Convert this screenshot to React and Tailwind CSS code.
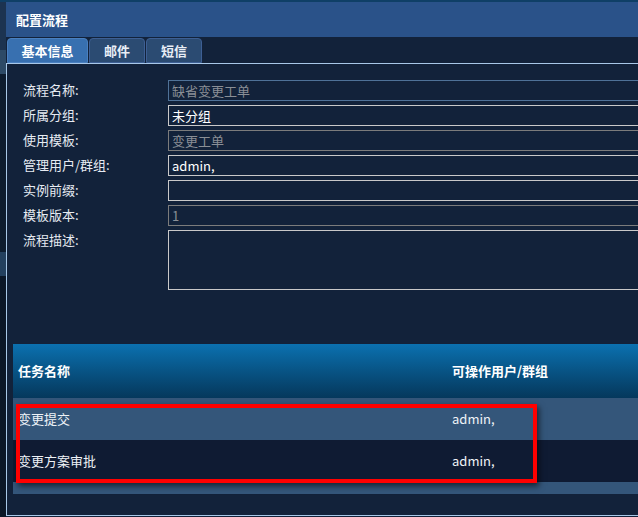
import React from 'react';

const fields = [
  { label: '流程名称:', value: '缺省变更工单', disabled: true, blue: true },
  { label: '所属分组:', value: '未分组' },
  { label: '使用模板:', value: '变更工单', disabled: true },
  { label: '管理用户/群组:', value: 'admin,' },
  { label: '实例前缀:', value: '' },
  { label: '模板版本:', value: '1', disabled: true },
];

const tasks = [
  { name: '变更提交', users: 'admin,', bg: 'bg-[#34567a]' },
  { name: '变更方案审批', users: 'admin,', bg: 'bg-[#0f1b33]' },
];

export default function App() {
  return (
    <div
      className="w-[638px] h-[517px] overflow-hidden bg-[#0b1a2c] flex flex-col text-[13px] text-white"
      style={{ fontFamily: '"Noto Sans CJK SC", "Noto Sans", sans-serif' }}
    >
      <div className="h-[2px] bg-[#0f3f66] shrink-0" />
      <div className="flex flex-1 min-h-0">
        {/* background page peeking on the left */}
        <div className="w-[6px] shrink-0 flex flex-col">
          <div className="h-[48px] bg-[#1c3350]" />
          <div className="h-[24px] bg-[#2d4a66]" />
          <div className="h-[178px] bg-[#0d1c2e]" />
          <div className="h-[24px] bg-[#23405e]" />
          <div className="flex-1 bg-[#0b1727]" />
        </div>

        {/* dialog */}
        <div className="flex-1 min-w-0 flex flex-col bg-[#12223a] overflow-hidden">
          <div className="h-[35px] shrink-0 bg-[#2a5289] flex items-center pl-[10px] font-bold text-[13px]">
            配置流程
          </div>

          <div className="h-[26px] shrink-0 flex items-end pl-[1px] gap-[1px]">
            <div className="w-[81px] h-[25px] rounded-t-[4px] bg-[#3870b0] border border-[#4a80c0] flex items-center justify-center font-bold">
              基本信息
            </div>
            <div className="w-[56px] h-[25px] rounded-t-[4px] bg-[#2b4b72] border border-[#3d5f94] flex items-center justify-center font-bold text-[#e8eef6]">
              邮件
            </div>
            <div className="w-[56px] h-[25px] rounded-t-[4px] bg-[#2b4b72] border border-[#3d5f94] flex items-center justify-center font-bold text-[#e8eef6]">
              短信
            </div>
          </div>

          <div className="flex-1 min-h-0 w-[700px] border-t border-l border-b border-[#a8c8e8] flex flex-col">
            {/* form */}
            <div className="pt-[16px] flex flex-col gap-[4px]">
              {fields.map((f) => (
                <div key={f.label} className="flex items-start h-[21px]">
                  <div className="w-[161px] pl-[16px] shrink-0 leading-[19px] text-[#e6ebf2]">{f.label}</div>
                  <div
                    className={`flex-1 h-[21px] border px-[3px] leading-[19px] whitespace-nowrap ${
                      f.blue
                        ? 'border-[#4f7298] text-[#8a8f96]'
                        : f.disabled
                        ? 'border-[#7c7c7c] text-[#8a8f96]'
                        : 'border-[#c9c9c9] text-white'
                    }`}
                  >
                    {f.value}
                  </div>
                </div>
              ))}
              <div className="flex items-start">
                <div className="w-[161px] pl-[16px] shrink-0 leading-[19px] text-[#e6ebf2]">流程描述:</div>
                <div className="flex-1 h-[60px] border border-[#c9c9c9]" />
              </div>
            </div>

            {/* task table */}
            <div className="relative mt-[54px] ml-[6px]">
              <div className="h-[54px] flex items-center font-bold bg-gradient-to-b from-[#0b71b0] to-[#05385c]">
                <div className="w-[439px] pl-[5px] shrink-0">任务名称</div>
                <div className="whitespace-nowrap">可操作用户/群组</div>
              </div>
              {tasks.map((t) => (
                <div key={t.name} className={`h-[42px] flex items-center ${t.bg}`}>
                  <div className="w-[439px] pl-[5px] shrink-0 text-[#eef2f7]">{t.name}</div>
                  <div className="text-[#eef2f7]">{t.users}</div>
                </div>
              ))}
              <div className="h-[12px] bg-[#34567a]" />
              <div className="absolute left-[3px] top-[60px] w-[521px] h-[79px] border-[4px] border-[#ff0000] shadow-[2px_3px_6px_rgba(0,0,0,0.6)]" />
            </div>
          </div>
          <div className="h-[1px] shrink-0" />
        </div>
      </div>
    </div>
  );
}
